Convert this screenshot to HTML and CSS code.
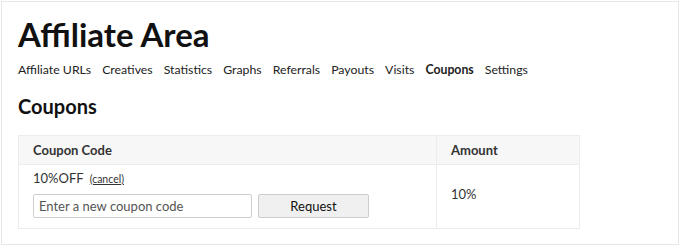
FILE: index.html
```html
<!DOCTYPE html>
<html lang="en">
<head>
    <meta charset="UTF-8">
    <title>Affiliate Area</title>
    <link rel="stylesheet" href="styles.css">
</head>
<body>
    <div class="frame">
        <h1>Affiliate Area</h1>
        <nav class="tabs">
            <a href="#">Affiliate URLs</a>
            <a href="#">Creatives</a>
            <a href="#">Statistics</a>
            <a href="#">Graphs</a>
            <a href="#">Referrals</a>
            <a href="#">Payouts</a>
            <a href="#">Visits</a>
            <a href="#" class="active">Coupons</a>
            <a href="#">Settings</a>
        </nav>
        <h2>Coupons</h2>
        <table class="coupons">
            <thead>
                <tr>
                    <th class="code-col">Coupon Code</th>
                    <th>Amount</th>
                </tr>
            </thead>
            <tbody>
                <tr>
                    <td>
                        <div class="current">10%OFF <a href="#" class="cancel">(cancel)</a></div>
                        <form class="request">
                            <input type="text" placeholder="Enter a new coupon code">
                            <button type="button">Request</button>
                        </form>
                    </td>
                    <td>10%</td>
                </tr>
            </tbody>
        </table>
    </div>
</body>
</html>
```

FILE: styles.css
```css
body {
    margin: 0;
    padding: 1px;
    font-family: 'Lato', sans-serif;
    color: #222;
    background: #fff;
}
.frame {
    height: 244px;
    box-sizing: border-box;
    border: 1px solid #e6e6e6;
    padding: 12px 16px 0;
}
h1 {
    margin: 0;
    font-size: 33px;
    font-weight: 700;
    line-height: 40px;
    color: #111;
}
.tabs {
    display: flex;
    gap: 11px;
    margin-top: 7px;
    font-size: 12.3px;
    line-height: 18px;
}
.tabs a {
    color: #222;
    text-decoration: none;
}
.tabs a.active {
    font-weight: 700;
}
h2 {
    margin: 14px 0 0;
    font-size: 20px;
    line-height: 26px;
    font-weight: 700;
    color: #111;
}
.coupons {
    width: 562px;
    margin-top: 16px;
    border-collapse: collapse;
    font-size: 13px;
}
.coupons th, .coupons td {
    border: 1px solid #ececec;
    text-align: left;
    padding: 0 14px;
}
.coupons th {
    height: 28px;
    background: #f7f7f7;
    font-weight: 700;
    color: #333;
}
.coupons .code-col {
    width: 389px;
}
.coupons td {
    color: #333;
    padding-top: 5px;
    padding-bottom: 10px;
}
.current {
    line-height: 16px;
}
.cancel {
    font-size: 10.5px;
    color: #333;
    margin-left: 3px;
}
.request {
    display: flex;
    gap: 6px;
    margin: 7px 0 0;
}
.request input {
    width: 219px;
    height: 24px;
    box-sizing: border-box;
    border: 1px solid #cfcfcf;
    border-radius: 2px;
    padding: 0 5px;
    font-family: inherit;
    font-size: 13px;
}
.request input::placeholder {
    color: #555;
}
.request button {
    width: 111px;
    height: 24px;
    border: 1px solid #cdcdcd;
    border-radius: 2px;
    background: #f0f0f0;
    font-family: inherit;
    font-size: 13px;
    color: #111;
}
```
